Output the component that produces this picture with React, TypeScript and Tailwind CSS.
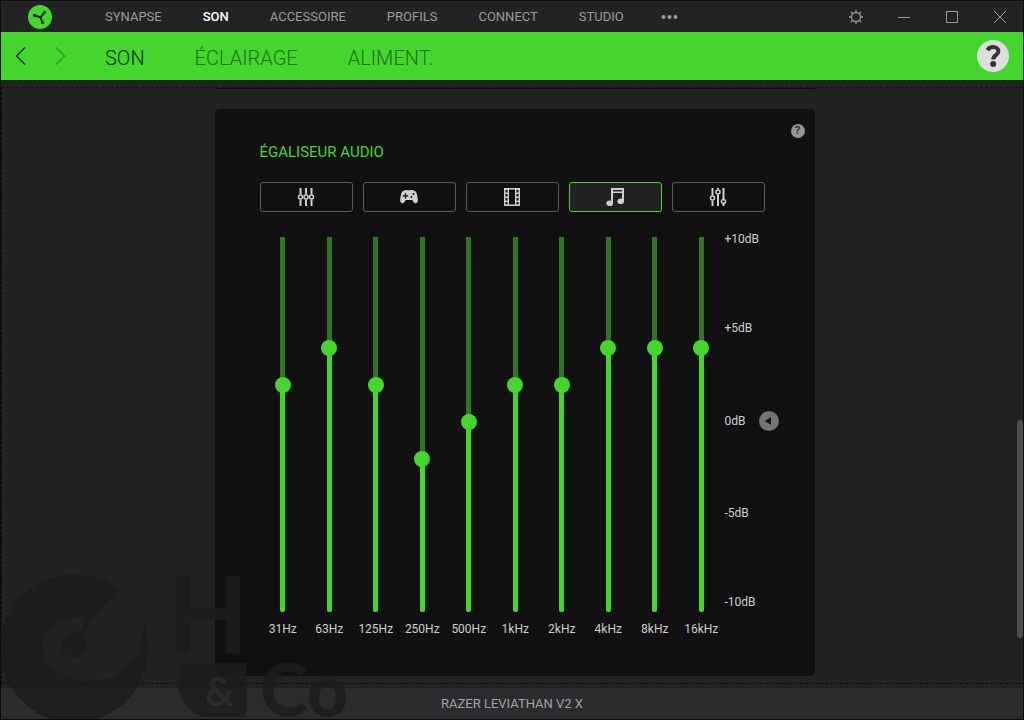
import { useState } from 'react';
import clsx from 'clsx';

const MENU = ['SYNAPSE', 'SON', 'ACCESSOIRE', 'PROFILS', 'CONNECT', 'STUDIO'];
const TABS = ['SON', 'ÉCLAIRAGE', 'ALIMENT.'];

const BANDS = [
  { label: '31Hz', gain: 2 },
  { label: '63Hz', gain: 4 },
  { label: '125Hz', gain: 2 },
  { label: '250Hz', gain: -2 },
  { label: '500Hz', gain: 0 },
  { label: '1kHz', gain: 2 },
  { label: '2kHz', gain: 2 },
  { label: '4kHz', gain: 4 },
  { label: '8kHz', gain: 4 },
  { label: '16kHz', gain: 4 },
];

function DefaultIcon() {
  return (
    <svg width="18" height="18" viewBox="0 0 18 18" fill="none" stroke="currentColor" strokeWidth="2">
      <path d="M3.500 0v6.500M3.500 11.500V18M9 0v6.500M9 11.500V18M14.500 0v6.500M14.500 11.500V18" />
      <circle cx="3.500" cy="9" r="2" strokeWidth="1.500" />
      <circle cx="9" cy="9" r="2" strokeWidth="1.500" />
      <circle cx="14.500" cy="9" r="2" strokeWidth="1.500" />
    </svg>
  );
}

function GameIcon() {
  return (
    <svg width="18" height="18" viewBox="0 0 18 18" fill="currentColor">
      <path
        fillRule="evenodd"
        d="M4.500 2.600c1-.8 2-.6 3-.4h3c1-.2 2-.4 3 .4 2.400.4 3 2 3.600 4.500.6 2.500 1 5.500.4 7-.6 1.400-3 1.500-4-.2l-1.300-2H5.800L4.500 13.900c-1 1.700-3.400 1.600-4 .2-.6-1.500-.2-4.500.4-7C1.500 4.600 2.100 3 4.500 2.600zM4.800 5.200v2h-2v1.400h2v2h1.400v-2h2V7.200h-2v-2zM13.500 5a1 1 0 1 0 .01 2 1 1 0 0 0 0-2zM11.500 8a1 1 0 1 0 .01 2 1 1 0 0 0 0-2z"
      />
    </svg>
  );
}

function MovieIcon() {
  return (
    <svg width="18" height="18" viewBox="0 0 18 18" fill="currentColor">
      <path
        fillRule="evenodd"
        d="M1 0h16v18H1zM6 1.500v15h6v-15zM2.500 2v2.500h2V2zM2.500 6v2.500h2V6zM2.500 10v2.500h2V10zM2.500 14v2.500h2V14zM13.500 2v2.500h2V2zM13.500 6v2.500h2V6zM13.500 10v2.500h2V10zM13.500 14v2.500h2V14z"
      />
    </svg>
  );
}

function MusicIcon() {
  return (
    <svg width="18" height="18" viewBox="0 0 18 18" fill="currentColor">
      <path fillRule="evenodd" d="M5 0h13v14h-2V5H7v10.500H5zM7 2v1.500h9V2z" />
      <ellipse cx="3.700" cy="15.200" rx="3.300" ry="2.800" />
      <ellipse cx="14.700" cy="13.300" rx="3.300" ry="2.800" />
    </svg>
  );
}

function CustomIcon() {
  return (
    <svg width="18" height="18" viewBox="0 0 18 18" fill="none" stroke="currentColor" strokeWidth="2">
      <path d="M3.500 0v7.500M3.500 12.500V18M9 0v1.500M9 6.500V18M14.500 0v11M14.500 16v2" />
      <circle cx="3.500" cy="10" r="2" strokeWidth="1.500" />
      <circle cx="9" cy="4" r="2" strokeWidth="1.500" />
      <circle cx="14.500" cy="13.500" r="2" strokeWidth="1.500" />
    </svg>
  );
}

const PRESETS = [
  { name: 'Par défaut', Icon: DefaultIcon },
  { name: 'Jeu', Icon: GameIcon },
  { name: 'Film', Icon: MovieIcon },
  { name: 'Musique', Icon: MusicIcon },
  { name: 'Personnalisé', Icon: CustomIcon },
];

function Logo() {
  return (
    <svg width="24" height="24" viewBox="0 0 24 24" className="shrink-0">
      <circle cx="12" cy="12" r="12" fill="#44d62c" />
      <g stroke="#16331a" strokeLinecap="round" fill="none">
        <path d="M12.500 12.300L6.500 10.500M12.500 12.300L16.500 7.500M12.500 12.300L14.500 17.500" strokeWidth="2" />
        <path d="M6.300 10.300l.6.200M16.200 7.700l.4-.5M14.300 17l.3.700" strokeWidth="3" />
      </g>
    </svg>
  );
}

function TitleBar() {
  return (
    <header className="flex h-[31px] items-center bg-[#222322] pr-[15px] text-[#9c9c9c]">
      <div className="w-[104px] shrink-0 pl-[27px]">
        <Logo />
      </div>
      <nav className="flex items-center gap-[41px] text-[13px] leading-4">
        {MENU.map((item) => (
          <a key={item} href="#" className={clsx(item === 'SON' && 'font-medium text-white')}>
            {item}
          </a>
        ))}
        <button aria-label="Plus" className="-ml-1">
          <svg width="17" height="6" viewBox="0 0 17 6" fill="currentColor">
            <circle cx="2.500" cy="3" r="2" />
            <circle cx="8.500" cy="3" r="2" />
            <circle cx="14.500" cy="3" r="2" />
          </svg>
        </button>
      </nav>
      <div className="ml-auto flex gap-8">
        <button aria-label="Paramètres" className="w-4">
          <svg width="16" height="16" viewBox="0 0 16 16" fill="none" stroke="currentColor" strokeWidth="1.300">
            <circle cx="8" cy="8" r="4.500" />
            <path d="M8 1v2.500M8 12.500V15M1 8h2.500M12.500 8H15M3 3l1.800 1.800M11.200 11.200L13 13M3 13l1.800-1.800M11.200 4.800L13 3" />
          </svg>
        </button>
        <button aria-label="Réduire" className="w-4">
          <svg width="16" height="16" viewBox="0 0 16 16" stroke="currentColor">
            <path d="M2 8.500h12" />
          </svg>
        </button>
        <button aria-label="Agrandir" className="w-4">
          <svg width="16" height="16" viewBox="0 0 16 16" fill="none" stroke="currentColor">
            <path d="M2.500 2.500h11v11h-11z" />
          </svg>
        </button>
        <button aria-label="Fermer" className="w-4">
          <svg width="16" height="16" viewBox="0 0 16 16" stroke="currentColor">
            <path d="M2 2l12 12M14 2L2 14" />
          </svg>
        </button>
      </div>
    </header>
  );
}

function TabBar() {
  return (
    <div className="flex h-12 items-center bg-[#44d62c] pr-3.5 text-[#14400d]">
      <div className="flex w-[104px] shrink-0 gap-[29px] pl-3.5">
        <button aria-label="Précédent">
          <svg width="11" height="20" viewBox="0 0 11 20" fill="none" stroke="#14290f" strokeWidth="1.300">
            <path d="M10 1.500L1.500 10l8.500 8.500" />
          </svg>
        </button>
        <button aria-label="Suivant">
          <svg width="11" height="20" viewBox="0 0 11 20" fill="none" stroke="#2f9a20" strokeWidth="1.300">
            <path d="M1 1.500L9.500 10 1 18.500" />
          </svg>
        </button>
      </div>
      <nav className="flex gap-[50px] pt-1 text-xl leading-6 font-light">
        {TABS.map((tab, i) => (
          <a key={tab} href="#" className={i === 0 ? 'text-[#0d260a]' : 'text-[#23701a]'}>
            {tab}
          </a>
        ))}
      </nav>
      <button aria-label="Aide" className="ml-auto size-8 rounded-full bg-[#dedede]">
        <svg width="32" height="32" viewBox="0 0 32 32" fill="none" stroke="#333333">
          <path d="M10.500 10.300c1.300-2.300 3.300-3.200 5.500-3.200 3.300 0 5.400 1.800 5.400 4.200 0 4.100-5.200 3.600-5.200 8.200" strokeWidth="4" />
          <circle cx="16.200" cy="24" r="3" fill="#333333" stroke="none" />
        </svg>
      </button>
    </div>
  );
}

function BandSlider({ label, gain, onChange }: { label: string; gain: number; onChange: (v: number) => void }) {
  return (
    <label className="flex flex-1 flex-col items-center gap-[7px]">
      <span className="grid items-end justify-items-center">
        <span className="mb-0.5 flex h-[375px] w-[5px] flex-col justify-end overflow-hidden rounded-b-sm bg-[#307524] [grid-area:1/1]">
          <span className="block bg-[#44d62c]" style={{ height: `${((190 + gain * 18.4) / 375) * 100}%` }} />
        </span>
        <input
          type="range"
          min={-10}
          max={10}
          value={gain}
          onChange={(e) => onChange(Number(e.target.value))}
          className="h-96 w-4 cursor-pointer appearance-none bg-transparent [direction:rtl] [grid-area:1/1] [writing-mode:vertical-lr] [&::-webkit-slider-thumb]:size-4 [&::-webkit-slider-thumb]:appearance-none [&::-webkit-slider-thumb]:rounded-full [&::-webkit-slider-thumb]:bg-[#44d62c]"
        />
      </span>
      <span className="text-xs leading-4">{label}</span>
    </label>
  );
}

function Equalizer() {
  const [preset, setPreset] = useState('Musique');
  const [gains, setGains] = useState(BANDS.map((b) => b.gain));

  const updateGain = (index: number, value: number) => {
    setGains(gains.map((g, i) => (i === index ? value : g)));
  };

  return (
    <section className="relative mx-auto mt-5 w-full max-w-[600px] rounded-[5px] bg-[#111112] px-[45px] pt-[33px] pb-[39px] text-[#cfcfcf]">
      <button
        aria-label="Aide égaliseur"
        className="absolute top-[15px] right-2.5 size-3.5 rounded-full bg-[#97959a] text-[11px] leading-[14px] font-medium text-[#222222]"
      >
        ?
      </button>
      <h2 className="text-[15px] leading-5 text-[#44d62c]">ÉGALISEUR AUDIO</h2>
      <div className="mt-5 mr-[5px] flex gap-2.5">
        {PRESETS.map(({ name, Icon }) => (
          <button
            key={name}
            aria-label={name}
            aria-pressed={preset === name}
            onClick={() => setPreset(name)}
            className={clsx(
              'flex h-[30px] flex-1 items-center justify-center rounded-[3px] border',
              preset === name ? 'border-[#44d62c] bg-[#222222]' : 'border-[#5a5a5a]'
            )}
          >
            <Icon />
          </button>
        ))}
      </div>
      <div className="mt-[18px] flex">
        <div className="flex flex-1">
          {BANDS.map((band, i) => (
            <BandSlider key={band.label} label={band.label} gain={gains[i]} onChange={(v) => updateGain(i, v)} />
          ))}
        </div>
        <div className="mt-0.5 -mr-[15px] flex h-[377px] w-[60px] flex-col justify-between text-xs leading-[14px]">
          <span>+10dB</span>
          <span>+5dB</span>
          <span className="flex h-5 items-center gap-[13px]">
            0dB
            <button
              aria-label="Réinitialiser"
              onClick={() => setGains(BANDS.map(() => 0))}
              className="size-5 rounded-full bg-[#757376]"
            >
              <svg width="20" height="20" viewBox="0 0 20 20">
                <path d="M6 10l6-4v8z" fill="#111112" />
              </svg>
            </button>
          </span>
          <span>-5dB</span>
          <span>-10dB</span>
        </div>
      </div>
    </section>
  );
}

function Watermark() {
  return (
    <svg
      width="352"
      height="170"
      viewBox="0 -20 352 170"
      className="pointer-events-none absolute bottom-0 left-0"
      fill="#1f1d1b"
      opacity="0.85"
    >
      <path d="M117 20A74 74 0 1 0 147 82q0-16-5-32C146 90 120 113 84 112 60 110 42 95 42 76c0-18 20-30 42-27l-4 19 7-10q0-5 5-9z" />
      <circle cx="73" cy="76" r="13" />
      <text x="168" y="84" fontFamily="Inter" fontSize="106" fontWeight="600">H</text>
      <path d="M176 94h69v54h-42c-16-4-27-20-27-37z" />
      <text x="204" y="137" fontFamily="Lato" fontSize="40" fontWeight="700" fill="#2c2b2c">&amp;</text>
      <text x="259" y="147" fontFamily="Lato" fontSize="72" fontWeight="900">Co</text>
    </svg>
  );
}

export default function App() {
  return (
    <div className="relative flex min-h-screen flex-col border border-[#0c0c0c] bg-[#232223] font-[Roboto,sans-serif]">
      <TitleBar />
      <TabBar />
      <main className="relative flex-1 pt-[7px] pb-1">
        <div className="h-full border border-r-0 border-dashed border-[#0f0f10] pb-[7px] pl-1">
          <div className="mx-auto h-px w-full max-w-[600px] rounded-b-[5px] bg-[#0b0b0c]" />
          <Equalizer />
        </div>
        <div className="absolute right-0 bottom-[50px] h-[218px] w-1.5 rounded-full bg-[#4d4d4d]" />
      </main>
      <footer className="h-[31px] bg-[#2c2b2d] text-center text-[13px] leading-8 text-[#a3a1a4]">
        RAZER LEVIATHAN V2 X
      </footer>
      <Watermark />
    </div>
  );
}
